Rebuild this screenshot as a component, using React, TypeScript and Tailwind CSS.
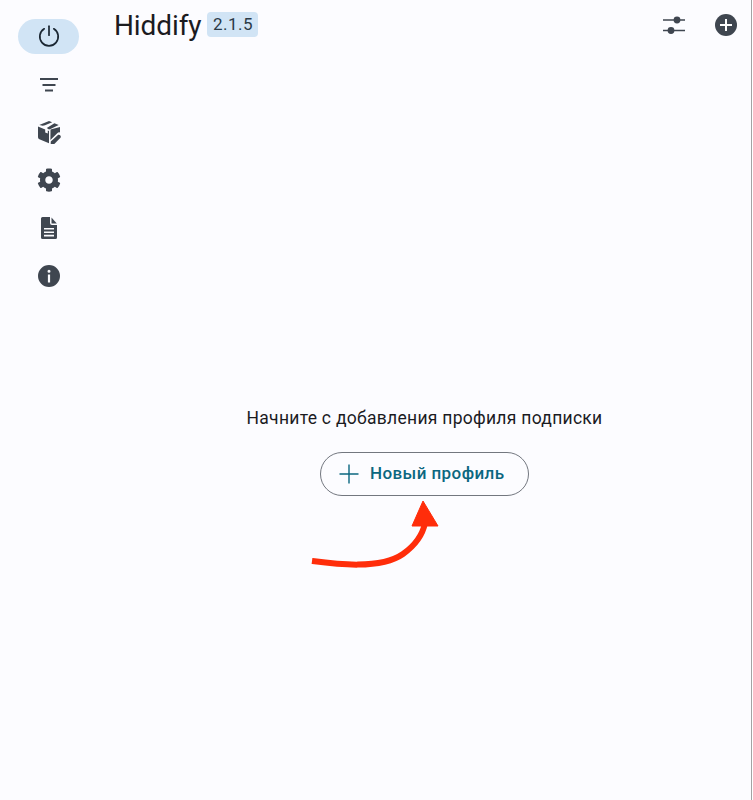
import { FaCog } from "react-icons/fa";

const ic = "#3f4650";

function NavIcon({ children }: { children: React.ReactNode }) {
  return <div className="w-[61px] h-[35px] flex items-center justify-center">{children}</div>;
}

export default function App() {
  return (
    <div className="relative w-[753px] h-[800px] bg-[#fcfcff] flex overflow-hidden font-['Roboto',sans-serif] text-[#1b1b1f]">
      <aside className="w-[96px] shrink-0 pt-[19px] pl-[18px] flex flex-col gap-[13px]">
        <div className="w-[61px] h-[35px] rounded-full bg-[#d1e4f5] flex items-center justify-center">
          <svg width="24" height="24" viewBox="0 0 24 24" fill="none" stroke="#1b2733" strokeWidth="1.7" strokeLinecap="round" className="-mt-[1px]">
            <path d="M12 2.200v9" />
            <path d="M7.200 4.800a9.200 9.200 0 1 0 9.600 0" />
          </svg>
        </div>
        <NavIcon>
          <svg width="24" height="24" viewBox="0 0 24 24" fill={ic}>
            <path d="M3 5h18v2H3zM5.500 11h13v2h-13zM8 16.500h8v2H8z" />
          </svg>
        </NavIcon>
        <NavIcon>
          <svg width="24" height="24" viewBox="0 0 24 24" fill={ic} className="-mt-[2px]">
            <path d="M1 6.600 8.200 9.400v3.200l2.600 1V10.400l1.200.5v12.300L2.400 19.300A2.200 2.200 0 0 1 1 17.300z" />
            <path d="M2.300 5 9.600 2 12 1 15.200 2.300 8 5.200l-1 .3-1.200.2zM9.800 8 17.400 3.300 21.700 5 14 8.700 12 9.500z" />
            <path d="M23 7v5.400a3.400 3.400 0 0 0-3 1l-6.600 6.700.1-10.600z" />
            <path d="M21.200 14.800a2 2 0 0 1 2.300 2.900L17.300 24l-3.600.1.100-2.500z" />
          </svg>
        </NavIcon>
        <NavIcon>
          <FaCog size={24} color={ic} className="-mt-[2px]" />
        </NavIcon>
        <NavIcon>
          <svg width="24" height="24" viewBox="0 0 24 24" fill={ic} className="-mt-[2px]">
            <path fillRule="evenodd" d="M5.500 1H13v6a2 2 0 0 0 2 2h5v12.500a1.500 1.500 0 0 1-1.500 1.500h-13A1.500 1.500 0 0 1 4 21.500v-19A1.500 1.500 0 0 1 5.500 1zM7 12v1.600h10V12zm0 3.400V17h10v-1.600zm0 3.400v1.600h10v-1.600z" />
            <path d="M14.500 1.500 19.800 7.500H15a.5.5 0 0 1-.5-.5z" />
          </svg>
        </NavIcon>
        <NavIcon>
          <svg width="24" height="24" viewBox="0 0 24 24" fill={ic} className="-mt-[2px]">
            <path fillRule="evenodd" d="M12 1a11 11 0 1 1 0 22 11 11 0 0 1 0-22zm-1.100 9.500v8h2.200v-8zM12 5.700a1.500 1.500 0 1 0 0 3 1.500 1.500 0 0 0 0-3z" />
          </svg>
        </NavIcon>
      </aside>

      <main className="flex-1 flex flex-col">
        <header className="h-[52px] pl-[18px] pr-[13px] flex items-center">
          <h1 className="text-[28px] font-normal leading-none tracking-[-0.1px]">Hiddify</h1>
          <span className="ml-[6px] mb-[3px] h-[25px] w-[51px] rounded-[4px] bg-[#d1e4f5] text-[17px] tracking-[0.5px] text-[#2b3a47] flex items-center justify-center">2.1.5</span>
          <div className="ml-auto mb-[2px] flex items-center gap-[28px]">
            <svg width="24" height="24" viewBox="0 0 24 24" fill={ic}>
              <path d="M1 6.200h22v1.600H1zM1 16.700h22v1.600H1z" />
              <circle cx="15" cy="7" r="3.400" />
              <circle cx="9" cy="17.500" r="3.400" />
            </svg>
            <svg width="24" height="24" viewBox="0 0 24 24">
              <circle cx="12" cy="12" r="11" fill={ic} />
              <path d="M11 6h2v5h5v2h-5v5h-2v-5H6v-2h5z" fill="#fff" />
            </svg>
          </div>
        </header>

        <div className="flex-1 flex flex-col items-center pt-[354px] pl-[2px]">
          <p className="text-[17.5px] leading-[24px] tracking-[0.28px]">Начните с добавления профиля подписки</p>
          <button className="mt-[22px] w-[209px] h-[44px] rounded-full border border-[#73777f] flex items-center pl-[17px] text-[#0b6780] text-[17px] font-medium tracking-[0.42px]">
            <svg width="22" height="22" viewBox="0 0 22 22" fill="#0b6780" className="mr-[10px] shrink-0">
              <path d="M10.300 1.500h1.400v8.800h8.800v1.400h-8.800v8.800h-1.400v-8.800H1.500v-1.400h8.800z" />
            </svg>
            Новый профиль
          </button>
        </div>
      </main>

      <div className="w-[2px] shrink-0 bg-white border-l border-[#a3a3a3]" />

      <svg className="absolute left-[305px] top-[495px]" width="140" height="80" viewBox="0 0 140 80" fill="none">
        <path d="M7 66C30 69 75 75 98 59 112 49 118 38 120 28" stroke="#ff2d0a" strokeWidth="6" />
        <path d="M118 6 107 31H133z" fill="#ff2d0a" stroke="#ff2d0a" strokeWidth="1" />
      </svg>
    </div>
  );
}
